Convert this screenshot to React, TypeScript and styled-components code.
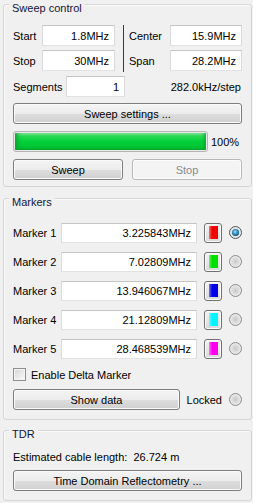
import React from 'react';
import styled, { createGlobalStyle, css } from 'styled-components';

const GlobalStyle = createGlobalStyle`
  html, body {
    margin: 0;
    padding: 0;
    background: #f0f0f0;
  }
  body {
    font-family: 'Liberation Sans', Tahoma, Arial, sans-serif;
    font-size: 11px;
    color: #000;
  }
`;

const Panel = styled.div`
  width: 253px;
  height: 503px;
  padding: 4px 1px 0 3px;
  box-sizing: border-box;
  display: flex;
  flex-direction: column;
  background: #f0f0f0;
`;

const Group = styled.div<{ $gap: number; $pb: number }>`
  display: flex;
  flex-direction: column;
  margin-top: ${(p) => p.$gap}px;
  padding: 0 9px ${(p) => p.$pb}px 9px;
  border: 1px solid #d5d5d5;
  border-radius: 3px;
  box-shadow: inset 1px 1px 0 #fafafa;
  &:first-child {
    margin-top: 0;
  }
`;

const Title = styled.div`
  align-self: flex-start;
  margin: -4px 0 0 -4px;
  padding: 0 3px;
  line-height: 14px;
  background: #f0f0f0;
  color: #14143a;
`;

const Label = styled.span`
  line-height: 14px;
  white-space: nowrap;
`;

const Field = styled.div<{ $h?: number }>`
  height: ${(p) => p.$h ?? 21}px;
  box-sizing: border-box;
  display: flex;
  align-items: center;
  justify-content: flex-end;
  padding-right: 5px;
  background: #fff;
  border: 1px solid;
  border-color: #c4c4c4 #dadada #e2e2e2 #dadada;
  white-space: nowrap;
`;

const RangeGrid = styled.div`
  display: grid;
  grid-template-columns: 29px 73px 14px 41px 72px;
  grid-template-rows: 21px 21px;
  row-gap: 4px;
  align-items: center;
  margin-top: 10px;
`;

const Divider = styled.div`
  grid-column: 3;
  grid-row: 1 / span 2;
  justify-self: center;
  width: 1px;
  height: 47px;
  margin-left: 2px;
  background: #3c3c3c;
`;

const SegmentRow = styled.div`
  display: grid;
  grid-template-columns: 53px 59px 1fr;
  align-items: center;
  margin-top: 5px;
`;

const Rate = styled.span`
  text-align: right;
  padding-right: 1px;
`;

const Button = styled.button<{ $width?: number }>`
  height: 21px;
  ${(p) =>
    p.$width
      ? css`
          width: ${p.$width}px;
        `
      : css`
          width: 100%;
        `}
  margin: 0;
  padding: 0;
  font-family: inherit;
  font-size: 11px;
  font-weight: 400;
  color: #000;
  border: 1px solid #7d7d7d;
  border-radius: 3px;
  background: linear-gradient(
    to bottom,
    #f4f4f4 0%,
    #ececec 50%,
    #dedede 51%,
    #d0d0d0 100%
  );
  box-shadow: inset 0 0 0 1px #fbfbfb;
  &:disabled {
    color: #8a8a8a;
    border-color: #b5b9bc;
    background: #f4f4f4;
    box-shadow: inset 0 0 0 1px #fcfcfc;
  }
`;

const Spaced = styled.div<{ $mt: number }>`
  margin-top: ${(p) => p.$mt}px;
`;

const ProgressRow = styled.div`
  display: flex;
  align-items: center;
  gap: 3px;
  margin-top: 7px;
`;

const Track = styled.div`
  width: 195px;
  height: 21px;
  box-sizing: border-box;
  padding: 1px;
  border: 1px solid #b4b4b4;
  border-radius: 3px;
  background: #e8e8e8;
`;

const Fill = styled.div`
  height: 100%;
  border-radius: 1px;
  background: linear-gradient(
    to bottom,
    #8eeaa3 0%,
    #2ad853 18%,
    #02d03a 50%,
    #00c633 82%,
    #06a82c 100%
  );
  box-shadow: inset 5px 0 5px -3px #0a9a30, inset -4px 0 4px -3px #0a9a30;
`;

const ButtonPair = styled.div`
  display: grid;
  grid-template-columns: 110px 110px;
  column-gap: 9px;
  margin-top: 7px;
`;

const MarkerList = styled.div`
  display: flex;
  flex-direction: column;
  gap: 8px;
  margin-top: 13px;
`;

const MarkerRow = styled.div`
  display: grid;
  grid-template-columns: 48px 136px 7px 18px 1fr;
  height: 21px;
  align-items: center;
`;

const Swatch = styled.div`
  grid-column: 4;
  width: 18px;
  height: 20px;
  box-sizing: border-box;
  display: flex;
  align-items: center;
  justify-content: center;
  border: 1px solid #707070;
  border-radius: 3px;
  background: linear-gradient(to bottom, #f2f2f2 0%, #e6e6e6 50%, #d8d8d8 100%);
  box-shadow: inset 0 0 0 1px #fbfbfb;
`;

const Chip = styled.div<{ $color: string }>`
  width: 9px;
  height: 13px;
  background: linear-gradient(
      to right,
      rgba(255, 255, 255, 0.45) 0%,
      rgba(255, 255, 255, 0) 35%
    ),
    ${(p) => p.$color};
`;

const Radio = styled.span<{ $on?: boolean }>`
  justify-self: end;
  position: relative;
  width: 13px;
  height: 13px;
  box-sizing: border-box;
  border-radius: 50%;
  border: 1px solid #8a8a8a;
  background: radial-gradient(
    circle at 50% 50%,
    #c9c9c9 0%,
    #dedede 45%,
    #f4f4f4 85%,
    #e4e4e4 100%
  );
  ${(p) =>
    p.$on &&
    css`
      border-color: #4e5458;
      &::after {
        content: '';
        position: absolute;
        left: 2px;
        top: 2px;
        width: 7px;
        height: 7px;
        border-radius: 50%;
        background: radial-gradient(
          circle at 45% 40%,
          #a9e2f8 0%,
          #3a9ad0 35%,
          #0f4d78 75%,
          #0a3352 100%
        );
      }
    `}
`;

const CheckRow = styled.label`
  display: flex;
  align-items: center;
  gap: 5px;
  height: 15px;
  margin-top: 8px;
`;

const Box = styled.span`
  width: 13px;
  height: 13px;
  box-sizing: border-box;
  border: 1px solid #8f8f8f;
  background: linear-gradient(135deg, #d4d4d4 0%, #ececec 60%, #fbfbfb 100%);
  box-shadow: inset 0 0 0 1px #f4f4f4;
`;

const DataRow = styled.div`
  display: flex;
  align-items: center;
  margin-top: 7px;
`;

const Locked = styled.span`
  flex: 1;
  text-align: right;
  padding-right: 7px;
`;

const CableLine = styled.div`
  line-height: 14px;
  margin-top: 9px;
`;

const markers = [
  { name: 'Marker 1', value: '3.225843MHz', color: '#f00000', on: true },
  { name: 'Marker 2', value: '7.02809MHz', color: '#00e000' },
  { name: 'Marker 3', value: '13.946067MHz', color: '#0000e8' },
  { name: 'Marker 4', value: '21.12809MHz', color: '#00f4ff' },
  { name: 'Marker 5', value: '28.468539MHz', color: '#ff00ee' },
];

export default function App() {
  return (
    <>
      <GlobalStyle />
      <Panel>
        <Group $gap={0} $pb={6}>
          <Title>Sweep control</Title>
          <RangeGrid>
            <Label>Start</Label>
            <Field>1.8MHz</Field>
            <Divider />
            <Label>Center</Label>
            <Field>15.9MHz</Field>
            <Label>Stop</Label>
            <Field>30MHz</Field>
            <Label>Span</Label>
            <Field>28.2MHz</Field>
          </RangeGrid>
          <SegmentRow>
            <Label>Segments</Label>
            <Field>1</Field>
            <Rate>282.0kHz/step</Rate>
          </SegmentRow>
          <Spaced $mt={6}>
            <Button>Sweep settings ...</Button>
          </Spaced>
          <ProgressRow>
            <Track>
              <Fill style={{ width: '100%' }} />
            </Track>
            <span>100%</span>
          </ProgressRow>
          <ButtonPair>
            <Button>Sweep</Button>
            <Button disabled>Stop</Button>
          </ButtonPair>
        </Group>

        <Group $gap={11} $pb={9}>
          <Title>Markers</Title>
          <MarkerList>
            {markers.map((m) => (
              <MarkerRow key={m.name}>
                <Label>{m.name}</Label>
                <Field $h={20}>{m.value}</Field>
                <Swatch>
                  <Chip $color={m.color} />
                </Swatch>
                <Radio $on={m.on} />
              </MarkerRow>
            ))}
          </MarkerList>
          <CheckRow>
            <Box />
            <span>Enable Delta Marker</span>
          </CheckRow>
          <DataRow>
            <Button $width={167}>Show data</Button>
            <Locked>Locked</Locked>
            <Radio />
          </DataRow>
        </Group>

        <Group $gap={10} $pb={9}>
          <Title>TDR</Title>
          <CableLine>Estimated cable length:&nbsp;&nbsp;26.724&nbsp;m</CableLine>
          <Spaced $mt={6}>
            <Button>Time Domain Reflectometry ...</Button>
          </Spaced>
        </Group>
      </Panel>
    </>
  );
}
